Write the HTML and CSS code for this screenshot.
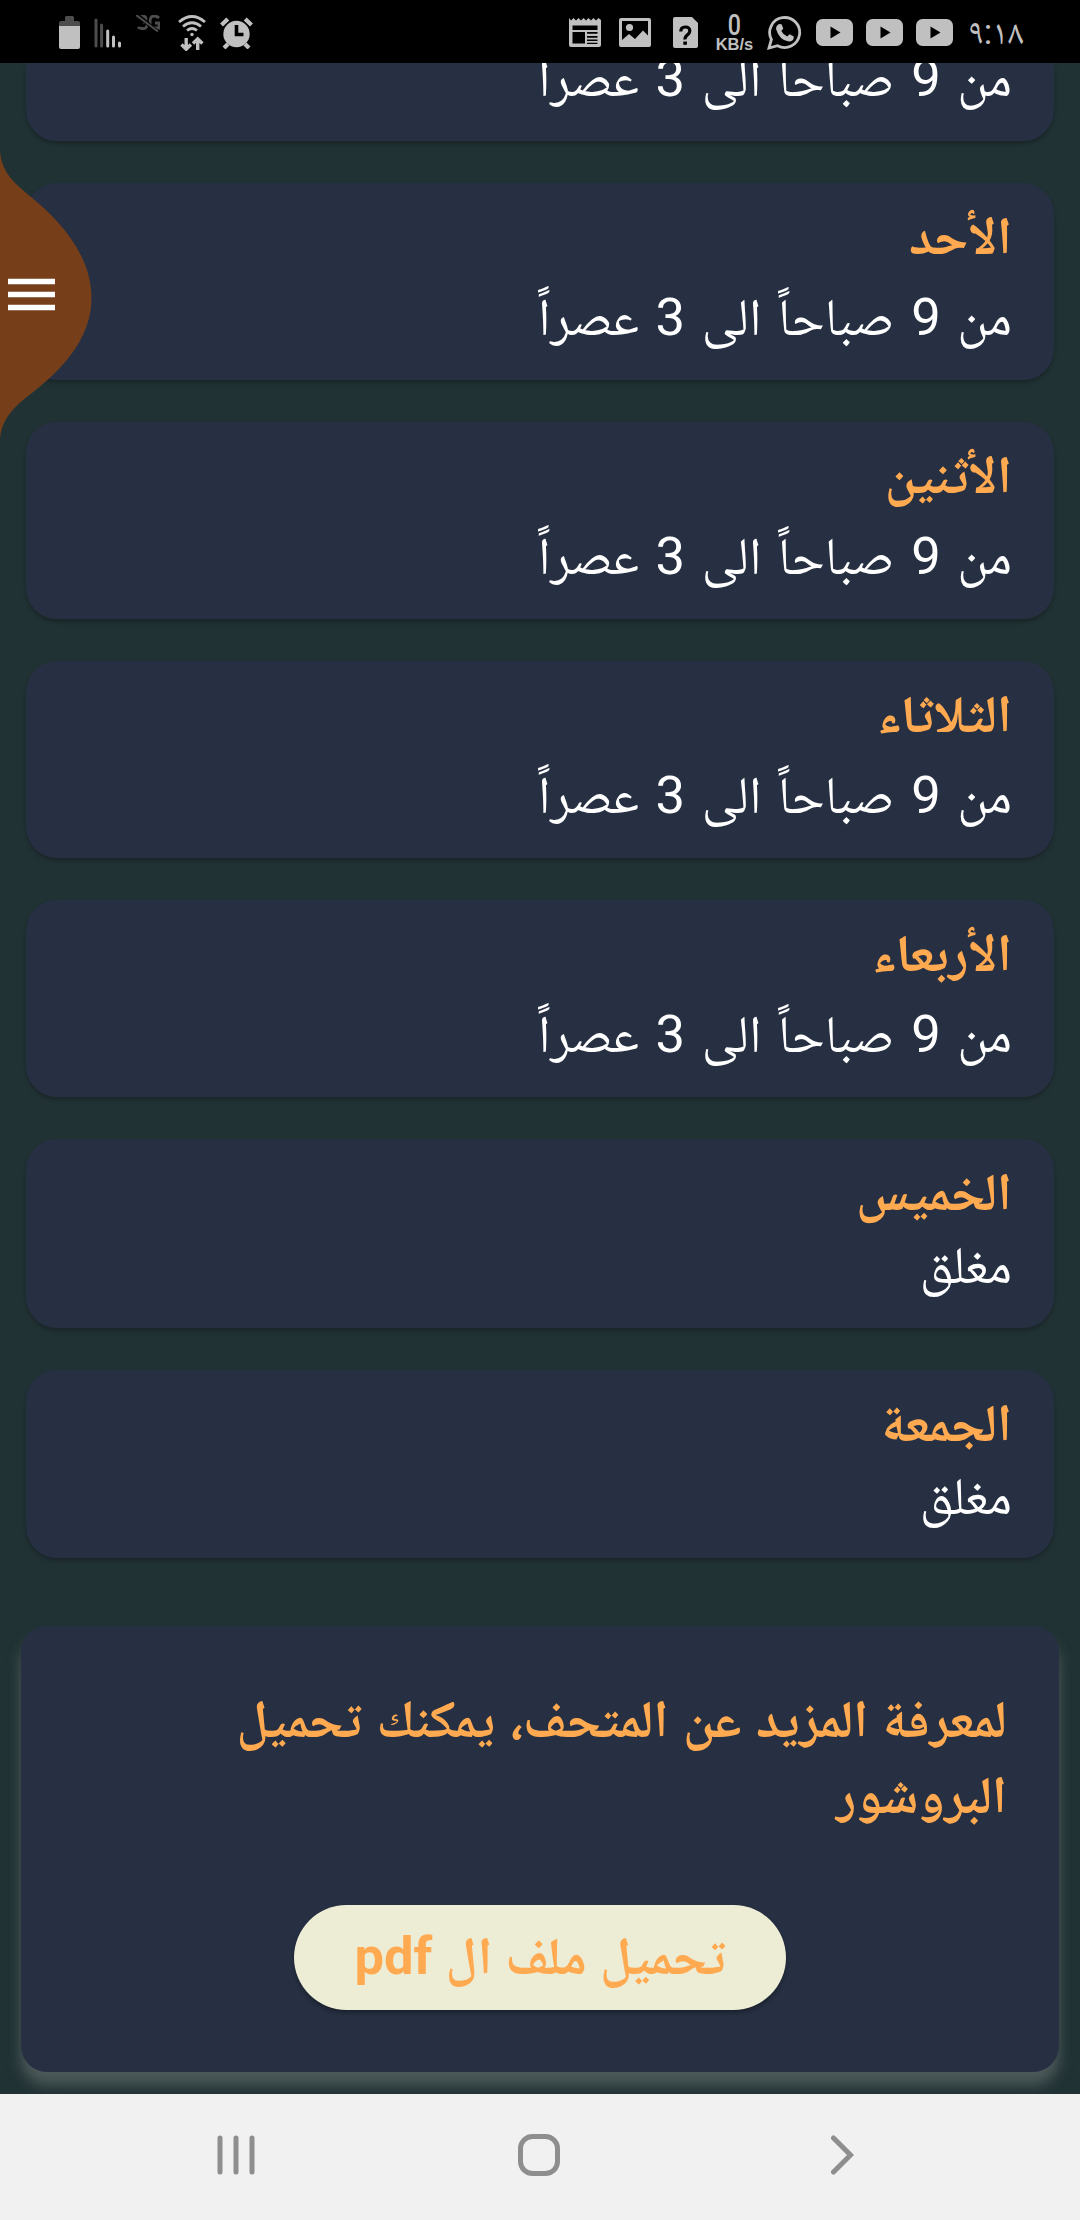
FILE: index.html
```html
<!DOCTYPE html>
<html lang="ar" dir="rtl">
<head>
<meta charset="utf-8">
<title>أوقات الدوام</title>
<link rel="stylesheet" href="styles.css">
</head>
<body>
<div class="screen">
  <header class="status" dir="ltr">
    <div class="status-left">
      <svg width="21" height="33" viewBox="0 0 21 33"><path fill="#4d4d4d" d="M6 1.5Q6 0 7.5 0h6Q15 0 15 1.5V5h4q2 0 2 2v3H0V7q0-2 2-2h4z"/><path fill="#c0c0c0" d="M0 10h21v21q0 2-2 2H2q-2 0-2-2z"/></svg>
      <svg width="28" height="30" viewBox="0 0 28 30" stroke-width="3" stroke-linecap="round"><path stroke="#4d4d4d" d="M2 2v26M7.600 7v21"/><path stroke="#c0c0c0" d="M13.700 13v15M19.500 19v9M25.500 25v3"/></svg>
      <svg class="net" width="24" height="18" viewBox="0 0 24 18" fill="none" stroke="#4d4d4d" stroke-width="2.800"><path d="M2 3Q4 1 7 1q3 0 3 3 0 3-3 3 4 0 4 3 0 4-5 3.500-3 0-4-1.500M23 3q-2-2-5-2-4 0-4 6 0 6 5 6h4V8h-4"/><path stroke="#000" stroke-width="4" d="M1 0l21 17"/><path stroke-width="2" d="M0 0l22 16.500"/></svg>
      <svg width="28" height="36" viewBox="0 0 28 36" fill="none" stroke="#c0c0c0" stroke-width="2.800"><path d="M1 7Q14-4 27 7M5 11.500Q14 4 23 11.500M9 15.500q5-4 10 0"/><circle cx="14" cy="19.500" r="1.700" fill="#c0c0c0" stroke="none"/><path stroke-width="3.400" d="M8.200 23v11M3.500 29.500l4.700 4.700 4.700-4.700M19.700 35V24M15 28.500l4.700-4.700 4.700 4.700"/></svg>
      <svg width="33" height="32" viewBox="0 0 33 32"><circle cx="16.500" cy="17" r="13.200" fill="#c0c0c0"/><path stroke="#c0c0c0" stroke-width="4.200" fill="none" d="M1.500 8L7.800 2M31.500 8l-6.300-6M4 31l4-4M29 31l-4-4"/><path fill="none" stroke="#000" stroke-width="3.600" d="M16.500 8v9.500h7"/></svg>
    </div>
    <div class="status-right">
      <svg width="32" height="29" viewBox="0 0 32 29"><path fill="#c0c0c0" fill-rule="evenodd" d="M0 0l2 2.500L4.500 0 7 2.500 9.500 0 12 2.500 14.500 0 17 2.500 19.500 0 22 2.500 24.500 0 27 2.500 29.500 0 32 2V27q0 2-2 2H2q-2 0-2-2zM3.500 7.500v4.500h25V7.500zM3.500 14v11.500h12.500V14zM18 14v1.800h10.500V14zM18 18v1.800h10.500V18zM18 21.500v1.600h10.500v-1.600zM18 24.800v1.200h10.500v-1.200z"/></svg>
      <svg class="pic" width="32" height="29" viewBox="0 0 32 29"><path fill="#c0c0c0" fill-rule="evenodd" d="M2 0h28q2 0 2 2v25q0 2-2 2H2q-2 0-2-2V2q0-2 2-2zM3 3v19l7-6 6 5 8-8.500 5 5V3z"/><circle cx="10.500" cy="9.500" r="3.600" fill="#c0c0c0"/></svg>
      <svg class="doc" width="25" height="31" viewBox="0 0 25 31"><path fill="#c0c0c0" d="M2 0h17l6 6v23q0 2-2 2H2q-2 0-2-2V2q0-2 2-2z"/><path fill="none" stroke="#000" stroke-width="3.200" d="M7.800 14.500q0-4.500 4.500-4.500t4.500 4q0 2-2.500 4t-2.300 4.500"/><path d="M10.300 24.500h3.600v3.300h-3.600z"/></svg>
      <div class="speed"><span class="speed-value">0</span><span class="speed-unit">KB/s</span></div>
      <svg class="wa" width="35" height="35" viewBox="0 0 35 35"><path fill="none" stroke="#c0c0c0" stroke-width="2.800" d="M2 33l2.400-8.500A15 15 0 1 1 10.500 30.700z"/><path fill="#c0c0c0" d="M12 9l2.500.3 1.800 4.200-2 2.500q2 4 6 5.500l2.300-2.300 4.200 2.200q.2 5-5 5.200Q12.500 25.500 9 14q0-3.500 3-5z"/></svg>
      <svg class="yt" width="37" height="27" viewBox="0 0 37 27"><rect width="37" height="27" rx="6.500" fill="#c0c0c0"/><path d="M14.500 7.500v12l10-6z"/></svg>
      <svg class="yt" width="37" height="27" viewBox="0 0 37 27"><rect width="37" height="27" rx="6.500" fill="#c0c0c0"/><path d="M14.500 7.500v12l10-6z"/></svg>
      <svg class="yt" width="37" height="27" viewBox="0 0 37 27"><rect width="37" height="27" rx="6.500" fill="#c0c0c0"/><path d="M14.500 7.500v12l10-6z"/></svg>
      <span class="clock">٩:١٨</span>
    </div>
  </header>

  <main class="content">
    <section class="day"><p>من 9 صباحاً الى 3 عصراً</p></section>
    <section class="day"><h2>الأحد</h2><p>من 9 صباحاً الى 3 عصراً</p></section>
    <section class="day"><h2>الأثنين</h2><p>من 9 صباحاً الى 3 عصراً</p></section>
    <section class="day"><h2>الثلاثاء</h2><p>من 9 صباحاً الى 3 عصراً</p></section>
    <section class="day"><h2>الأربعاء</h2><p>من 9 صباحاً الى 3 عصراً</p></section>
    <section class="day closed"><h2>الخميس</h2><p>مغلق</p></section>
    <section class="day closed"><h2>الجمعة</h2><p>مغلق</p></section>
    <section class="brochure">
      <h3>لمعرفة المزيد عن المتحف، يمكنك تحميل البروشور</h3>
      <button class="download" type="button">تحميل ملف ال pdf</button>
    </section>
    <svg class="drawer-tab" width="92" height="290" viewBox="0 0 92 290"><path fill="#7a4019" fill-opacity=".96" d="M0 0C1 22 14 33 31 47C58 69 91.500 104 91.500 148C91.500 190 60 221 32 243C14 256 1 270 0 290z"/><path stroke="#fff" stroke-width="5.600" d="M8 131.500h47M8 144.500h47M8 157.500h47"/></svg>
  </main>

  <nav class="navbar" dir="ltr">
    <svg width="38" height="42" viewBox="0 0 38 42"><path fill="none" stroke="#8e8e8e" stroke-width="5" stroke-linecap="round" d="M3 4v34M19 4v34M35 4v34"/></svg>
    <svg class="home" width="42" height="42" viewBox="0 0 42 42"><rect x="2.500" y="2.500" width="37" height="37" rx="12" fill="none" stroke="#8e8e8e" stroke-width="5"/></svg>
    <svg width="24" height="42" viewBox="0 0 24 42"><path fill="none" stroke="#8e8e8e" stroke-width="5" stroke-linecap="round" d="M2.500 4l17 17-17 17"/></svg>
  </nav>
</div>
</body>
</html>
```
FILE: styles.css
```css
* { box-sizing: border-box; margin: 0; }

body {
  font-family: Roboto, "Noto Naskh Arabic", "Noto Naskh Arabic UI", sans-serif;
  background: #213235;
}

.screen {
  display: flex;
  flex-direction: column;
  width: 1080px;
  height: 2220px;
  overflow: hidden;
}

svg { display: block; flex: none; }

.status {
  position: relative;
  z-index: 2;
  flex: none;
  display: flex;
  justify-content: space-between;
  height: 63px;
  padding: 0 58px 0 59px;
  background: #000;
  color: #c0c0c0;
}
.status-left, .status-right { display: flex; align-items: center; height: 65px; }
.status-left { gap: 14px; }
.status-left svg:nth-child(4) { margin-left: 4px; }
.net { margin-bottom: 18px; }
.pic { margin-left: 18px; }
.doc { margin-left: 22px; }
.speed {
  display: flex;
  flex-direction: column;
  align-items: center;
  width: 37px;
  margin-left: 18px;
}
.speed-value { font-size: 29px; line-height: 22px; transform: scaleX(.8); font-weight: 500; }
.speed-unit { font: bold 16.500px/16px "Liberation Sans", sans-serif; }
.wa { margin-left: 14px; }
.yt { margin-left: 13px; }
.wa + .yt { margin-left: 14px; }
.clock { margin-left: 15px; font-size: 35px; line-height: 63px; width: 54px; white-space: nowrap; }

.content {
  position: relative;
  flex: 1;
  display: flex;
  flex-direction: column;
  min-height: 0;
  overflow: hidden;
  background: #213235;
}

.day {
  flex: none;
  height: 197px;
  margin: 0 26px 42px;
  padding: 17px 42px 0;
  border-radius: 31px;
  background: #263042;
  box-shadow: 0 3px 4px rgba(0, 0, 0, .25);
}
.day:first-child { height: 78px; padding-top: 0; border-radius: 0 0 31px 31px; }
.day:first-child p { margin-top: -27px; }
.day.closed { height: 188.500px; }
.day h2 {
  margin-bottom: 3px;
  color: #ffa951;
  font-size: 52.500px;
  font-weight: 700;
  line-height: 72px;
}
.day p {
  color: #fff;
  font-size: 52.500px;
  line-height: 84px;
  word-spacing: 3.600px;
}
.day.closed p { line-height: 68px; }

.brochure {
  flex: none;
  display: flex;
  flex-direction: column;
  align-items: center;
  height: 446px;
  margin: 26px 21px 0;
  padding: 55px 52px 0;
  border-radius: 26px;
  background: #263042;
  box-shadow: 0 13px 14px rgba(120, 130, 125, .5);
}
.brochure h3 {
  width: 100%;
  color: #ffa951;
  font-size: 52.500px;
  font-weight: 700;
  line-height: 76px;
  word-spacing: 1.500px;
}
.download {
  width: 492px;
  height: 105px;
  margin-top: 72px;
  padding: 0 0 2px;
  border: 0;
  border-radius: 53px;
  background: #ededd6;
  box-shadow: 0 3px 4px rgba(0, 0, 0, .3);
  color: #ffa951;
  font: 700 52.500px/103px Roboto, "Noto Naskh Arabic", "Noto Naskh Arabic UI", sans-serif;
  white-space: nowrap;
}

.drawer-tab { position: absolute; left: 0; top: 87px; }

.navbar {
  flex: none;
  display: flex;
  justify-content: space-between;
  align-items: center;
  height: 126px;
  padding: 0 225px 4px 217px;
  background: #f1f1f1;
}
.home { margin-right: 9px; }
```
